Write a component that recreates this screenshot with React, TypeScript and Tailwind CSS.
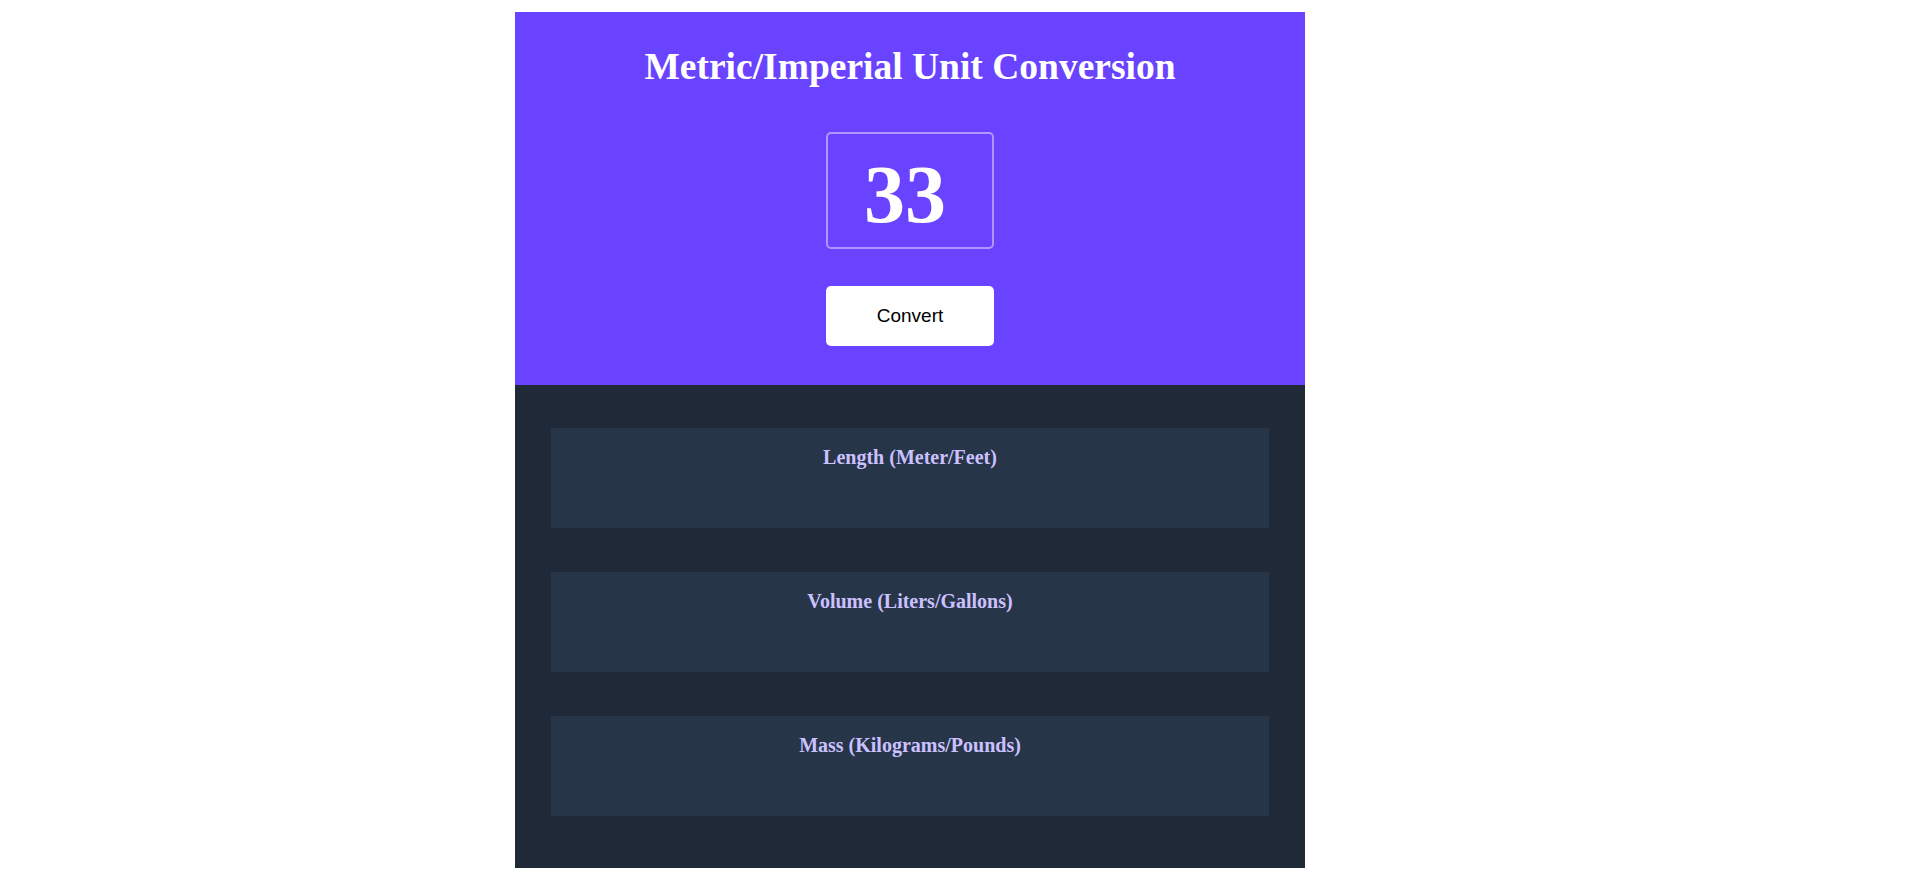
import React from "react";

const serif = { fontFamily: '"Liberation Serif", "Times New Roman", serif' };

function Card({ title }: { title: string }) {
  return (
    <div className="h-[100px] bg-[#273549] pt-[18px] text-center">
      <h2
        className="text-[20px] leading-[23px] font-bold text-[#CCC1FF]"
        style={serif}
      >
        {title}
      </h2>
    </div>
  );
}

export default function App() {
  return (
    <div className="min-h-[878px] w-full bg-white pt-[12px]">
      <div className="ml-[515px] flex w-[790px] flex-col">
        <section className="flex flex-col items-center bg-[#6943FF] pt-[33px] pb-[39px]">
          <h1
            className="h-[43px] text-[37.5px] leading-[43px] font-bold text-white"
            style={serif}
          >
            Metric/Imperial Unit Conversion
          </h1>
          <div
            className="mt-[44px] flex h-[117px] w-[168px] items-center justify-center rounded-[5px] border-2 border-[#B295FF] pt-[8px] pr-[10px] text-[82px] leading-none font-bold text-white"
            style={serif}
          >
            33
          </div>
          <button
            className="mt-[37px] h-[60px] w-[168px] rounded-[5px] bg-white text-[19px] text-black"
            style={{ fontFamily: '"Liberation Sans", Arial, sans-serif' }}
          >
            Convert
          </button>
        </section>
        <section className="flex h-[483px] flex-col gap-[44px] bg-[#1F2937] px-[36px] pt-[43px]">
          <Card title="Length (Meter/Feet)" />
          <Card title="Volume (Liters/Gallons)" />
          <Card title="Mass (Kilograms/Pounds)" />
        </section>
      </div>
    </div>
  );
}
